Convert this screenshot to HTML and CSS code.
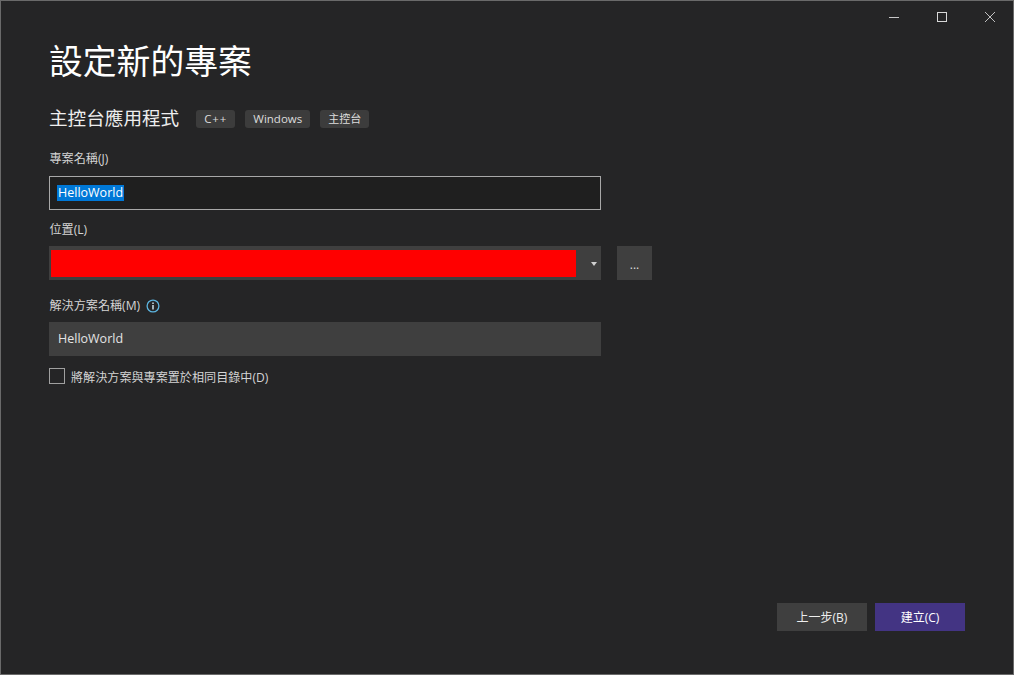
FILE: index.html
```html
<!DOCTYPE html>
<html lang="zh-Hant">
<head>
<meta charset="utf-8">
<title>設定新的專案</title>
<link rel="stylesheet" href="styles.css">
</head>
<body>
<div class="window">
  <div class="caption">
    <svg class="cap-icon" width="12" height="12" viewBox="0 0 12 12"><path d="M1 6.5H11" stroke="#c8c8c8" fill="none"/></svg>
    <svg class="cap-icon" width="12" height="12" viewBox="0 0 12 12"><rect x="1.5" y="1.5" width="9" height="9" stroke="#d8d8d8" fill="none"/></svg>
    <svg class="cap-icon" width="12" height="12" viewBox="0 0 12 12"><path d="M1 1L11 11M11 1L1 11" stroke="#c0c0c0" fill="none"/></svg>
  </div>
  <main class="content">
    <h1 class="title">設定新的專案</h1>
    <div class="subhead">
      <h2 class="template">主控台應用程式</h2>
      <span class="tag tag-plus">C++</span>
      <span class="tag">Windows</span>
      <span class="tag tag-cjk">主控台</span>
    </div>
    <label class="label first">專案名稱(J)</label>
    <div class="input focused"><span class="selected">HelloWorld</span></div>
    <label class="label">位置(L)</label>
    <div class="location-row">
      <div class="combo">
        <div class="redact"></div>
        <svg class="caret" width="6" height="4" viewBox="0 0 6 4"><path d="M0 0H6L3 4Z" fill="#d0d0d0"/></svg>
      </div>
      <div class="browse">...</div>
    </div>
    <div class="label with-info">
      <span>解決方案名稱(M)</span>
      <svg width="14" height="14" viewBox="0 0 14 14"><circle cx="7" cy="7" r="5.9" stroke="#5db5e0" stroke-width="1.3" fill="none"/><path d="M7 6V10.5" stroke="#d8eef8" stroke-width="1.4"/><path d="M7 3.4V5" stroke="#d8eef8" stroke-width="1.4"/></svg>
    </div>
    <div class="input filled">HelloWorld</div>
    <div class="check-row">
      <span class="checkbox"></span>
      <span class="check-text">將解決方案與專案置於相同目錄中(D)</span>
    </div>
    <div class="actions">
      <button class="btn">上一步(B)</button>
      <button class="btn primary">建立(C)</button>
    </div>
  </main>
</div>
</body>
</html>
```

FILE: styles.css
```css
* { box-sizing: border-box; }
html, body { margin: 0; padding: 0; }
body {
  width: 1014px;
  height: 675px;
  overflow: hidden;
  background: #252526;
  font-family: "Open Sans", "Noto Sans CJK TC", sans-serif;
  color: #e0e0e0;
}
.window {
  width: 1014px;
  height: 675px;
  display: flex;
  flex-direction: column;
  border: 1px solid #6a6a6a;
  background: #252526;
}
.caption {
  display: flex;
  justify-content: flex-end;
  gap: 36px;
  height: 32px;
  padding: 10px 17px 0 0;
}
.cap-icon { display: block; }
.content {
  flex: 1;
  display: flex;
  flex-direction: column;
  padding: 0 48px 43px 48px;
}
.title {
  margin: 6px 0 0;
  height: 44px;
  line-height: 44px;
  font-size: 33.8px;
  font-weight: 400;
  color: #fff;
}
.subhead {
  display: flex;
  align-items: center;
  height: 22px;
  margin-top: 24px;
}
.template {
  margin: 0 17px 0 0;
  font-size: 18.6px;
  font-weight: 400;
  color: #eee;
  line-height: 22px;
}
.tag {
  display: block;
  height: 18px;
  line-height: 18px;
  padding: 0 8px;
  margin: 2px 10px 0 0;
  border-radius: 3px;
  background: #3c3c3c;
  font-size: 11.5px;
  color: #dcdcdc;
}
.tag-plus { letter-spacing: 0.9px; }
.tag-cjk { font-size: 11px; }
.label {
  display: block;
  height: 18px;
  line-height: 18px;
  margin-top: 11px;
  padding-left: 0.5px;
  font-size: 12.1px;
  color: #d4d4d4;
}
.first { margin-top: 21px; }
.input {
  width: 552px;
  height: 34px;
  line-height: 32px;
  padding-left: 7px;
  font-size: 12.5px;
  color: #eee;
  margin-top: 7px;
}
.focused {
  border: 1px solid #a8a8a8;
  background: #1f1f1f;
  display: flex;
  align-items: center;
  margin-top: 8px;
}
.selected {
  display: block;
  height: 16px;
  line-height: 16px;
  padding: 0 1px;
  background: #0078d7;
  color: #fff;
}
.location-row {
  display: flex;
  gap: 16px;
  margin-top: 7px;
}
.combo {
  width: 552px;
  height: 34px;
  background: #3f3f3f;
  padding: 3px 0 3px 2px;
  display: flex;
  align-items: center;
}
.redact {
  width: 525px;
  height: 27px;
  background: #ff0000;
}
.caret { margin-left: 15px; margin-top: 1px; }
.browse {
  width: 35px;
  height: 34px;
  background: #3f3f3f;
  text-align: center;
  font-size: 12px;
  line-height: 37px;
  color: #ddd;
}
.with-info {
  display: flex;
  align-items: center;
  gap: 6px;
  margin-top: 17px;
}
.filled {
  background: #3f3f3f;
  line-height: 33px;
  padding-left: 9px;
  color: #e4e4e4;
}
.check-row {
  display: flex;
  gap: 6px;
  height: 16px;
  margin-top: 12px;
}
.checkbox {
  display: block;
  width: 16px;
  height: 16px;
  border: 1px solid #a0a0a0;
}
.check-text { margin-top: 1px; font-size: 12.1px; color: #d4d4d4; line-height: 18px; }
.actions {
  display: flex;
  justify-content: flex-end;
  gap: 8px;
  margin-top: auto;
}
.btn {
  width: 90px;
  height: 28px;
  padding: 0;
  border: 0;
  background: #3f3f3f;
  color: #eee;
  font: inherit;
  font-size: 12px;
}
.primary { background: #433483; color: #fff; }
```
